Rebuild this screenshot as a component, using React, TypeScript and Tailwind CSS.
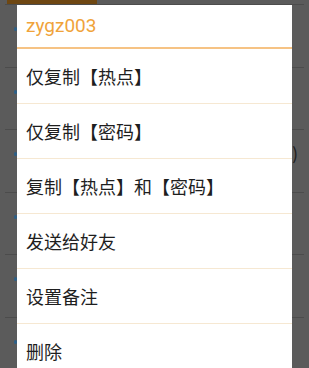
const items = [
  "仅复制【热点】",
  "仅复制【密码】",
  "复制【热点】和【密码】",
  "发送给好友",
  "设置备注",
  "删除",
];

const bgRows = [0, 1, 2, 3, 4, 5];

export default function App() {
  return (
    <div
      className="relative h-[368px] w-[309px] overflow-hidden bg-[#5b5b5b]"
      style={{ fontFamily: '"Noto Sans CJK SC", "Noto Sans", sans-serif' }}
    >
      {/* dimmed list behind the dialog */}
      <div className="ml-[7px] h-[4px] w-[90px] bg-[#6e4712]" />
      <div className="mx-[5px] flex flex-col">
        {bgRows.map((r) => (
          <div key={r} className="flex h-[62.5px] items-start justify-between border-t border-[#4c4c4c] pl-[9px] pr-[6px] pt-[22px]">
            <div className="h-[4px] w-[3px] rounded-full bg-[#2d5f86]" />
            {r === 2 && (
              <span className="-mt-[12px] text-[17px] text-[#1a1a1a]">)</span>
            )}
          </div>
        ))}
      </div>

      {/* dialog */}
      <div className="absolute left-[17px] top-[5px] w-[275px] bg-white">
        <div className="flex h-[44px] items-center border-b-2 border-[#f6c384] px-[9px]">
          <span
            className="text-[19px] text-[#f0a33a]"
            style={{ fontFamily: "Roboto, sans-serif" }}
          >
            zygz003
          </span>
        </div>
        {items.map((t, i) => (
          <div
            key={t}
            className={`flex h-[55px] items-center px-[9px] text-[18px] text-[#1e1e1e] ${
              i < items.length - 1 ? "border-b border-[#f6e8d2]" : ""
            }`}
          >
            {t}
          </div>
        ))}
      </div>
    </div>
  );
}
